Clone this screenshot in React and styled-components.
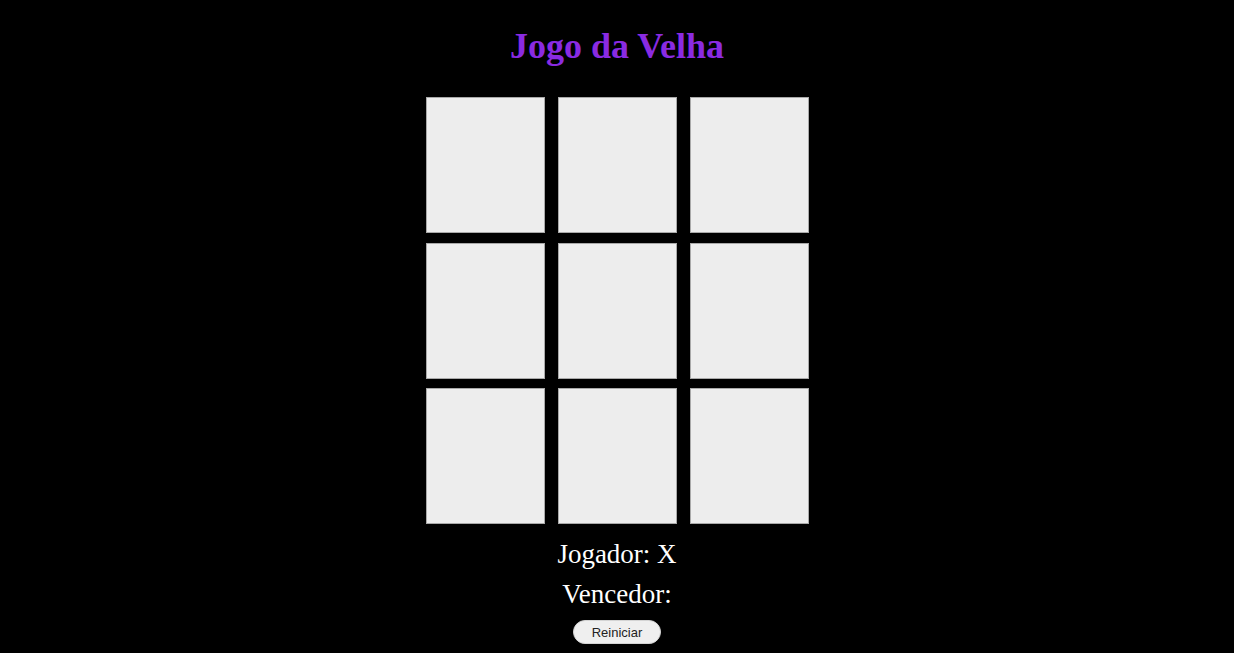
import React, { useState } from "react";
import styled, { createGlobalStyle } from "styled-components";

const GlobalStyle = createGlobalStyle`
  html, body {
    margin: 0;
    background: #000;
  }
  body {
    font-family: "Liberation Serif", "Times New Roman", serif;
  }
`;

const Page = styled.main`
  min-height: 653px;
  display: flex;
  flex-direction: column;
  align-items: center;
  background: #000;
`;

const Title = styled.h1`
  margin: 26px 0 0;
  font-size: 36px;
  line-height: 40px;
  font-weight: bold;
  color: #8a2be2;
`;

const Board = styled.div`
  margin-top: 31px;
  display: grid;
  grid-template-columns: repeat(3, 119px);
  grid-auto-rows: 136px;
  column-gap: 13px;
  row-gap: 9.5px;
`;

const Cell = styled.button`
  box-sizing: border-box;
  margin: 0;
  padding: 0;
  background: #ededed;
  border: 1px solid #a9a9a9;
  font-family: "Liberation Sans", Arial, sans-serif;
  font-size: 64px;
  color: #222;
  cursor: pointer;
`;

const Status = styled.div`
  margin-top: ${(p) => p.$top}px;
  font-size: 27px;
  line-height: 40px;
  color: #fff;
`;

const ResetButton = styled.button`
  margin-top: 6px;
  width: 88px;
  height: 24px;
  padding: 0;
  border: 1px solid #d4d4d4;
  border-radius: 12px;
  background: #efefef;
  font-family: "Liberation Sans", Arial, sans-serif;
  font-size: 13px;
  color: #222;
  cursor: pointer;
`;

const lines = [
  [0, 1, 2], [3, 4, 5], [6, 7, 8],
  [0, 3, 6], [1, 4, 7], [2, 5, 8],
  [0, 4, 8], [2, 4, 6],
];

function winnerOf(cells) {
  for (const [a, b, c] of lines) {
    if (cells[a] && cells[a] === cells[b] && cells[a] === cells[c]) return cells[a];
  }
  return "";
}

export default function App() {
  const [cells, setCells] = useState(Array(9).fill(""));
  const [player, setPlayer] = useState("X");
  const winner = winnerOf(cells);

  const play = (i) => {
    if (cells[i] || winner) return;
    const next = cells.slice();
    next[i] = player;
    setCells(next);
    setPlayer(player === "X" ? "O" : "X");
  };

  const reset = () => {
    setCells(Array(9).fill(""));
    setPlayer("X");
  };

  return (
    <Page>
      <GlobalStyle />
      <Title>Jogo da Velha</Title>
      <Board>
        {cells.map((v, i) => (
          <Cell key={i} onClick={() => play(i)}>
            {v}
          </Cell>
        ))}
      </Board>
      <Status $top={10}>Jogador: {player}</Status>
      <Status $top={0}>Vencedor: {winner}</Status>
      <ResetButton onClick={reset}>Reiniciar</ResetButton>
    </Page>
  );
}
